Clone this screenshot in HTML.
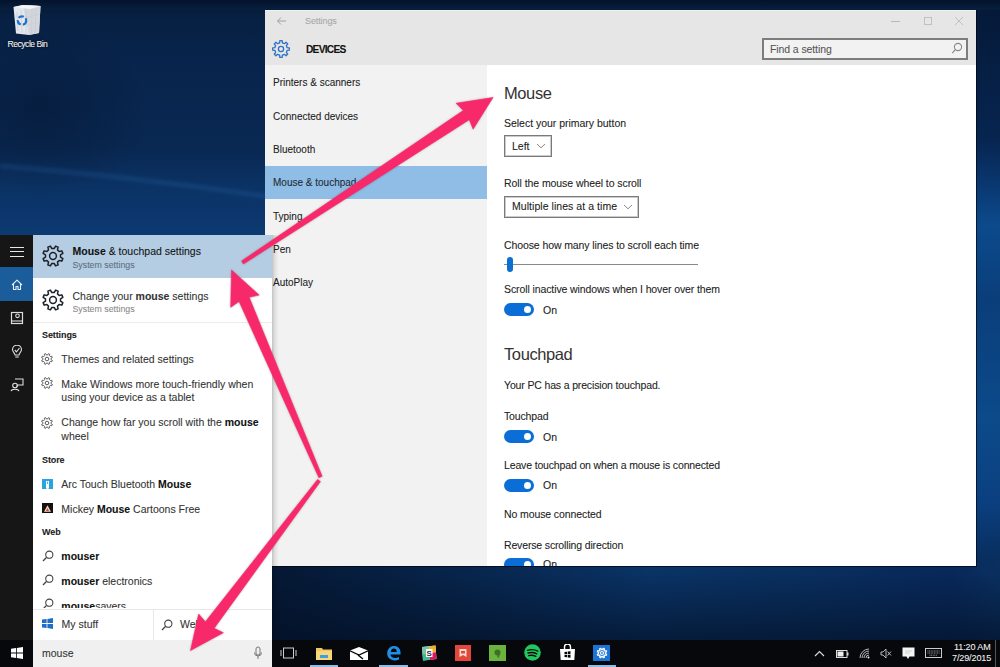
<!DOCTYPE html>
<html><head><meta charset="utf-8"><style>
html,body{margin:0;padding:0;}
body{width:1000px;height:667px;position:relative;overflow:hidden;font-family:"Liberation Sans", sans-serif;
background:#0a2a55;}
.t{position:absolute;white-space:nowrap;-webkit-text-stroke:0.08px currentColor;}
</style></head><body>
<div style="position:absolute;left:0px;top:0px;width:270px;height:240px;background:linear-gradient(180deg,#051632 0px,#072042 16px,#08244c 60px,#092852 150px,#0b3264 185px,#0c3a72 235px);"></div>
<div style="position:absolute;left:0px;top:0px;width:270px;height:240px;background:radial-gradient(ellipse 110px 90px at 40px 110px, rgba(3,15,35,0.35), rgba(3,15,35,0));"></div>
<svg style="position:absolute;left:0;top:0" width="270" height="240"><defs><filter id="bl" x="-50%" y="-50%" width="200%" height="200%"><feGaussianBlur stdDeviation="2"/></filter></defs><path d="M0 166 Q 130 176 270 197" stroke="rgba(60,140,220,0.3)" stroke-width="2.5" fill="none" filter="url(#bl)"/></svg>
<div style="position:absolute;left:970px;top:0px;width:30px;height:640px;background:linear-gradient(180deg,#041430 0px,#051a3a 14px,#072550 140px,#0a3a74 190px,#0c4a8c 225px,#0a3e7a 300px,#0c4a8a 420px,#0b4080 500px,#082e5e 560px,#06234c 640px);"></div>
<div style="position:absolute;left:0px;top:0px;width:1000px;height:10px;background:linear-gradient(180deg,#04122b,#07203f);"></div>
<div style="position:absolute;left:0px;top:560px;width:1000px;height:80px;background:linear-gradient(180deg,rgba(10,50,100,0) 0px, rgba(3,15,35,0.0) 12px, rgba(3,15,35,0.65) 80px),linear-gradient(90deg,#051834 0px,#051834 270px,#07244a 450px,#0a3366 650px,#092e5e 820px,#08285a 950px,#0a3060 1000px);"></div>
<svg style="position:absolute;left:13px;top:4px" width="28" height="32" viewBox="0 0 28 32">
<path d="M0.5 3 L10 1 L27.5 2 L26 29 L16 31 L3 29.5 Z" fill="#e4e7eb"/>
<path d="M10 1 L27.5 2 L26 29 L16 31 Z" fill="#d3d7dd"/>
<path d="M0.5 3 L10 1 L27.5 2 L17 5 Z" fill="#f3f4f6"/>
<path d="M4 8 L5 27 M8 6 L9 29 M13 6 L13 30 M19 5 L18.5 30 M23 4.5 L22 29" stroke="#c3c8cf" stroke-width="0.6"/>
<path d="M1 12 L16 13 L27 10 M2 20 L16 21 L26.5 18" stroke="#c8cdd3" stroke-width="0.6" fill="none"/>
<circle cx="9" cy="16.5" r="4.2" fill="none" stroke="#1f6fd0" stroke-width="2.2" stroke-dasharray="5.5 2.3"/>
</svg>
<div class="t" style="left:7.5px;top:39.72px;font-size:8.6px;line-height:8.6px;color:#f4f4f4;font-weight:normal;letter-spacing:-0.5px;text-shadow:0 0 2px #000;">Recycle Bin</div>
<div style="position:absolute;left:265px;top:10px;width:711px;height:556px;background:#fff;box-shadow:1px 1px 0 rgba(0,5,15,0.7);"></div>
<div style="position:absolute;left:265px;top:10px;width:711px;height:55px;background:#e6e6e6;"></div>
<div style="position:absolute;left:265px;top:10px;width:711px;height:1px;background:#f0f0f0;"></div>
<svg style="position:absolute;left:276px;top:16px" width="11" height="10" viewBox="0 0 11 10"><path d="M10 5 H1.5 M5 1.5 L1.5 5 L5 8.5" stroke="#a0a0a0" stroke-width="1" fill="none"/></svg>
<div class="t" style="left:305px;top:17.38px;font-size:9px;line-height:9px;color:#a8a8a8;font-weight:normal;letter-spacing:-0.1px;">Settings</div>
<div style="position:absolute;left:891px;top:21px;width:9px;height:1px;background:#b8b8b8;"></div>
<div style="position:absolute;left:924px;top:17px;width:8px;height:8px;border:1px solid #c0c0c0;box-sizing:border-box;"></div>
<svg style="position:absolute;left:954px;top:16px" width="10" height="10" viewBox="0 0 10 10"><path d="M1 1 L9 9 M9 1 L1 9" stroke="#c0c0c0" stroke-width="1"/></svg>
<svg style="position:absolute;left:270px;top:38px" width="22" height="22" viewBox="0 0 22 22"><path d="M17.15 9.63 L19.32 9.82 L19.32 12.18 L17.15 12.37 L16.32 14.38 L17.72 16.04 L16.04 17.72 L14.38 16.32 L12.37 17.15 L12.18 19.32 L9.82 19.32 L9.63 17.15 L7.62 16.32 L5.96 17.72 L4.28 16.04 L5.68 14.38 L4.85 12.37 L2.68 12.18 L2.68 9.82 L4.85 9.63 L5.68 7.62 L4.28 5.96 L5.96 4.28 L7.62 5.68 L9.63 4.85 L9.82 2.68 L12.18 2.68 L12.37 4.85 L14.38 5.68 L16.04 4.28 L17.72 5.96 L16.32 7.62 Z" fill="none" stroke="#2f72c4" stroke-width="1.3" stroke-linejoin="round"/><circle cx="11" cy="11" r="2.6" fill="none" stroke="#2f72c4" stroke-width="1.3"/></svg>
<div class="t" style="left:306px;top:44.97px;font-size:10.2px;line-height:10.2px;color:#111;font-weight:bold;letter-spacing:-0.75px;">DEVICES</div>
<div style="position:absolute;left:762px;top:38px;width:206px;height:22px;border:2px solid #7d7d7d;box-sizing:border-box;background:#f2f2f2;"></div>
<div class="t" style="left:770px;top:44.11px;font-size:10.5px;line-height:10.5px;color:#555;font-weight:normal;letter-spacing:-0.1px;">Find a setting</div>
<svg style="position:absolute;left:951px;top:42px" width="12" height="13" viewBox="0 0 12 13"><circle cx="7" cy="5" r="3.6" fill="none" stroke="#888" stroke-width="1.1"/><path d="M4.4 7.7 L1.2 11.2" stroke="#888" stroke-width="1.2"/></svg>
<div style="position:absolute;left:265px;top:65px;width:222px;height:501px;background:#f2f2f2;"></div>
<div style="position:absolute;left:265px;top:166px;width:222px;height:33px;background:#8fbde6;"></div>
<div class="t" style="left:273px;top:78.33px;font-size:10px;line-height:10px;color:#222;font-weight:normal;letter-spacing:0px;">Printers &amp; scanners</div>
<div class="t" style="left:273px;top:111.63px;font-size:10px;line-height:10px;color:#222;font-weight:normal;letter-spacing:0px;">Connected devices</div>
<div class="t" style="left:273px;top:144.93px;font-size:10px;line-height:10px;color:#222;font-weight:normal;letter-spacing:0px;">Bluetooth</div>
<div class="t" style="left:273px;top:178.23px;font-size:10px;line-height:10px;color:#1f2a35;font-weight:normal;letter-spacing:0px;">Mouse &amp; touchpad</div>
<div class="t" style="left:273px;top:211.53px;font-size:10px;line-height:10px;color:#222;font-weight:normal;letter-spacing:0px;">Typing</div>
<div class="t" style="left:273px;top:244.84px;font-size:10px;line-height:10px;color:#222;font-weight:normal;letter-spacing:0px;">Pen</div>
<div class="t" style="left:273px;top:278.13px;font-size:10px;line-height:10px;color:#222;font-weight:normal;letter-spacing:0px;">AutoPlay</div>
<div class="t" style="left:504px;top:85.03px;font-size:16.5px;line-height:16.5px;color:#333;font-weight:normal;letter-spacing:-0.4px;-webkit-text-stroke:0;">Mouse</div>
<div class="t" style="left:504px;top:118.11px;font-size:10.5px;line-height:10.5px;color:#222;font-weight:normal;letter-spacing:-0.02px;">Select your primary button</div>
<div style="position:absolute;left:504px;top:135px;width:48px;height:21.5px;border:1px solid #7a7a7a;box-shadow:inset 0 0 0 1px rgba(140,140,140,0.45);box-sizing:border-box;"></div>
<div class="t" style="left:512px;top:140.61px;font-size:10.5px;line-height:10.5px;color:#222;font-weight:normal;letter-spacing:0px;">Left</div>
<svg style="position:absolute;left:536px;top:143px" width="10" height="6" viewBox="0 0 10 6"><path d="M1 1 L5 4.8 L9 1" stroke="#8a8a8a" stroke-width="1" fill="none"/></svg>
<div class="t" style="left:504px;top:178.41px;font-size:10.5px;line-height:10.5px;color:#222;font-weight:normal;letter-spacing:-0.07px;">Roll the mouse wheel to scroll</div>
<div style="position:absolute;left:504px;top:196px;width:135px;height:21.5px;border:1px solid #7a7a7a;box-shadow:inset 0 0 0 1px rgba(140,140,140,0.45);box-sizing:border-box;"></div>
<div class="t" style="left:512px;top:201.41px;font-size:10.5px;line-height:10.5px;color:#222;font-weight:normal;letter-spacing:0.05px;">Multiple lines at a time</div>
<svg style="position:absolute;left:623px;top:204px" width="10" height="6" viewBox="0 0 10 6"><path d="M1 1 L5 4.8 L9 1" stroke="#8a8a8a" stroke-width="1" fill="none"/></svg>
<div class="t" style="left:504px;top:239.71px;font-size:10.5px;line-height:10.5px;color:#222;font-weight:normal;letter-spacing:-0.1px;">Choose how many lines to scroll each time</div>
<div style="position:absolute;left:504px;top:264px;width:194px;height:1px;background:#8a8a8a;"></div>
<div style="position:absolute;left:507px;top:257px;width:6px;height:15px;background:#0f6fd0;border-radius:3px;"></div>
<div class="t" style="left:504px;top:283.71px;font-size:10.5px;line-height:10.5px;color:#222;font-weight:normal;letter-spacing:-0.1px;">Scroll inactive windows when I hover over them</div>
<div style="position:absolute;left:504px;top:303px;width:30px;height:13px;background:#0a6ed6;border-radius:7px;"></div>
<div style="position:absolute;left:524px;top:306px;width:7px;height:7px;background:#fff;border-radius:50%;"></div>
<div class="t" style="left:543px;top:304.61px;font-size:10.5px;line-height:10.5px;color:#222;font-weight:normal;letter-spacing:0px;">On</div>
<div class="t" style="left:504px;top:346.43px;font-size:16.5px;line-height:16.5px;color:#333;font-weight:normal;letter-spacing:-0.4px;-webkit-text-stroke:0;">Touchpad</div>
<div class="t" style="left:504px;top:380.31px;font-size:10.5px;line-height:10.5px;color:#222;font-weight:normal;letter-spacing:-0.15px;">Your PC has a precision touchpad.</div>
<div class="t" style="left:504px;top:410.81px;font-size:10.5px;line-height:10.5px;color:#222;font-weight:normal;letter-spacing:-0.15px;">Touchpad</div>
<div style="position:absolute;left:504px;top:430px;width:30px;height:13px;background:#0a6ed6;border-radius:7px;"></div>
<div style="position:absolute;left:524px;top:433px;width:7px;height:7px;background:#fff;border-radius:50%;"></div>
<div class="t" style="left:543px;top:431.91px;font-size:10.5px;line-height:10.5px;color:#222;font-weight:normal;letter-spacing:0px;">On</div>
<div class="t" style="left:504px;top:459.81px;font-size:10.5px;line-height:10.5px;color:#222;font-weight:normal;letter-spacing:-0.15px;">Leave touchpad on when a mouse is connected</div>
<div style="position:absolute;left:504px;top:479px;width:30px;height:13px;background:#0a6ed6;border-radius:7px;"></div>
<div style="position:absolute;left:524px;top:482px;width:7px;height:7px;background:#fff;border-radius:50%;"></div>
<div class="t" style="left:543px;top:480.11px;font-size:10.5px;line-height:10.5px;color:#222;font-weight:normal;letter-spacing:0px;">On</div>
<div class="t" style="left:504px;top:509.01px;font-size:10.5px;line-height:10.5px;color:#222;font-weight:normal;letter-spacing:-0.1px;">No mouse connected</div>
<div class="t" style="left:504px;top:539.51px;font-size:10.5px;line-height:10.5px;color:#222;font-weight:normal;letter-spacing:-0.15px;">Reverse scrolling direction</div>
<div style="position:absolute;left:265px;top:550px;width:711px;height:16px;overflow:hidden;">
<div style="position:absolute;left:239px;top:7.5px;width:30px;height:13px;background:#0a6ed6;border-radius:7px;"></div><div style="position:absolute;left:259px;top:10.5px;width:7px;height:7px;background:#fff;border-radius:50%;"></div>
<div class="t" style="left:278px;top:8.61px;font-size:10.5px;line-height:10.5px;color:#222;">On</div>
</div>
<div style="position:absolute;left:0px;top:640px;width:1000px;height:27px;background:#07080b;"></div>
<div style="position:absolute;left:0px;top:235px;width:33px;height:405px;background:#161616;"></div>
<div style="position:absolute;left:0px;top:267px;width:33px;height:34px;background:#1b5c9b;"></div>
<div style="position:absolute;left:33px;top:235px;width:239px;height:405px;background:#fff;"></div>
<div style="position:absolute;left:33px;top:235px;width:239px;height:42.5px;background:#b5cde3;"></div>
<div style="position:absolute;left:33px;top:640px;width:239px;height:27px;background:#f0f0f0;"></div>
<div style="position:absolute;left:272px;top:235px;width:7px;height:405px;background:linear-gradient(90deg,rgba(0,0,0,0.2),rgba(0,0,0,0.08) 40%,rgba(0,0,0,0));"></div>
<div style="position:absolute;left:9.5px;top:246.5px;width:14.5px;height:1.3px;background:#e8e8e8;"></div>
<div style="position:absolute;left:9.5px;top:251px;width:14.5px;height:1.3px;background:#e8e8e8;"></div>
<div style="position:absolute;left:9.5px;top:255.5px;width:14.5px;height:1.3px;background:#e8e8e8;"></div>
<svg style="position:absolute;left:11px;top:279px" width="12" height="12" viewBox="0 0 12 12"><path d="M1 6 L6 1.2 L11 6 M2.5 4.8 V10.5 H5 V7.5 H7 V10.5 H9.5 V4.8" stroke="#e8eef6" stroke-width="1.1" fill="none" stroke-linejoin="round"/></svg>
<svg style="position:absolute;left:10px;top:311px" width="14" height="14" viewBox="0 0 14 14"><rect x="1.5" y="1.5" width="11" height="11" fill="none" stroke="#ddd" stroke-width="1.2"/><path d="M1.5 10 H12.5" stroke="#ddd" stroke-width="1.1"/><circle cx="7.5" cy="4.8" r="1.8" fill="none" stroke="#ddd" stroke-width="1.1"/></svg>
<svg style="position:absolute;left:11px;top:345px" width="12" height="14" viewBox="0 0 12 14"><path d="M4 10 C4 8 1.5 7 1.5 4.6 A4.5 4.5 0 0 1 10.5 4.6 C10.5 7 8 8 8 10 Z" fill="none" stroke="#ddd" stroke-width="1.1"/><path d="M4.3 12 H7.7" stroke="#ddd" stroke-width="1.1"/><path d="M3.8 5 L5.5 6.8 L8.5 3" stroke="#ddd" stroke-width="1.1" fill="none"/></svg>
<svg style="position:absolute;left:10px;top:378px" width="14" height="14" viewBox="0 0 14 14"><path d="M5 1 H13 V7 H8 L6.5 8.5" fill="none" stroke="#ddd" stroke-width="1.1"/><circle cx="5" cy="7.5" r="2.3" fill="none" stroke="#ddd" stroke-width="1.1"/><path d="M1 13.2 C1.5 10.5 8.5 10.5 9 13.2" fill="none" stroke="#ddd" stroke-width="1.1"/></svg>
<svg style="position:absolute;left:40.8px;top:243.5px" width="24" height="24" viewBox="0 0 24 24"><path d="M13.19 4.49 L14.61 2.14 L17.12 3.18 L16.47 5.85 L18.15 7.53 L20.82 6.88 L21.86 9.39 L19.51 10.81 L19.51 13.19 L21.86 14.61 L20.82 17.12 L18.15 16.47 L16.47 18.15 L17.12 20.82 L14.61 21.86 L13.19 19.51 L10.81 19.51 L9.39 21.86 L6.88 20.82 L7.53 18.15 L5.85 16.47 L3.18 17.12 L2.14 14.61 L4.49 13.19 L4.49 10.81 L2.14 9.39 L3.18 6.88 L5.85 7.53 L7.53 5.85 L6.88 3.18 L9.39 2.14 L10.81 4.49 Z" fill="none" stroke="#1c2228" stroke-width="1.5" stroke-linejoin="round"/><circle cx="12" cy="12" r="3.4" fill="none" stroke="#1c2228" stroke-width="1.5"/></svg>
<div class="t" style="left:72.5px;top:245.61px;font-size:10.5px;line-height:10.5px;color:#111;font-weight:normal;letter-spacing:0px;"><b>Mouse</b> &amp; touchpad settings</div>
<div class="t" style="left:72.5px;top:261.25px;font-size:8.8px;line-height:8.8px;color:#5f6f80;font-weight:normal;letter-spacing:0px;">System settings</div>
<svg style="position:absolute;left:40.8px;top:287.5px" width="24" height="24" viewBox="0 0 24 24"><path d="M13.19 4.49 L14.61 2.14 L17.12 3.18 L16.47 5.85 L18.15 7.53 L20.82 6.88 L21.86 9.39 L19.51 10.81 L19.51 13.19 L21.86 14.61 L20.82 17.12 L18.15 16.47 L16.47 18.15 L17.12 20.82 L14.61 21.86 L13.19 19.51 L10.81 19.51 L9.39 21.86 L6.88 20.82 L7.53 18.15 L5.85 16.47 L3.18 17.12 L2.14 14.61 L4.49 13.19 L4.49 10.81 L2.14 9.39 L3.18 6.88 L5.85 7.53 L7.53 5.85 L6.88 3.18 L9.39 2.14 L10.81 4.49 Z" fill="none" stroke="#1c2228" stroke-width="1.5" stroke-linejoin="round"/><circle cx="12" cy="12" r="3.4" fill="none" stroke="#1c2228" stroke-width="1.5"/></svg>
<div class="t" style="left:72.5px;top:290.61px;font-size:10.5px;line-height:10.5px;color:#333;font-weight:normal;letter-spacing:0px;">Change your <b>mouse</b> settings</div>
<div class="t" style="left:72.5px;top:305.05px;font-size:8.8px;line-height:8.8px;color:#8a8a8a;font-weight:normal;letter-spacing:0px;">System settings</div>
<div style="position:absolute;left:33px;top:322px;width:239px;height:1px;background:#ececec;"></div>
<div class="t" style="left:42px;top:331.08px;font-size:9px;line-height:9px;color:#222;font-weight:bold;letter-spacing:-0.1px;">Settings</div>
<svg style="position:absolute;left:40.1px;top:351.5px" width="14" height="14" viewBox="0 0 14 14"><path d="M7.64 2.95 L8.41 1.68 L9.76 2.24 L9.41 3.68 L10.32 4.59 L11.76 4.24 L12.32 5.59 L11.05 6.36 L11.05 7.64 L12.32 8.41 L11.76 9.76 L10.32 9.41 L9.41 10.32 L9.76 11.76 L8.41 12.32 L7.64 11.05 L6.36 11.05 L5.59 12.32 L4.24 11.76 L4.59 10.32 L3.68 9.41 L2.24 9.76 L1.68 8.41 L2.95 7.64 L2.95 6.36 L1.68 5.59 L2.24 4.24 L3.68 4.59 L4.59 3.68 L4.24 2.24 L5.59 1.68 L6.36 2.95 Z" fill="none" stroke="#5a5a5a" stroke-width="1.0" stroke-linejoin="round"/><circle cx="7" cy="7" r="1.8" fill="none" stroke="#5a5a5a" stroke-width="1.0"/></svg>
<div class="t" style="left:61.3px;top:353.61px;font-size:10.5px;line-height:10.5px;color:#333;font-weight:normal;letter-spacing:0px;">Themes and related settings</div>
<svg style="position:absolute;left:40.1px;top:376.4px" width="14" height="14" viewBox="0 0 14 14"><path d="M7.64 2.95 L8.41 1.68 L9.76 2.24 L9.41 3.68 L10.32 4.59 L11.76 4.24 L12.32 5.59 L11.05 6.36 L11.05 7.64 L12.32 8.41 L11.76 9.76 L10.32 9.41 L9.41 10.32 L9.76 11.76 L8.41 12.32 L7.64 11.05 L6.36 11.05 L5.59 12.32 L4.24 11.76 L4.59 10.32 L3.68 9.41 L2.24 9.76 L1.68 8.41 L2.95 7.64 L2.95 6.36 L1.68 5.59 L2.24 4.24 L3.68 4.59 L4.59 3.68 L4.24 2.24 L5.59 1.68 L6.36 2.95 Z" fill="none" stroke="#5a5a5a" stroke-width="1.0" stroke-linejoin="round"/><circle cx="7" cy="7" r="1.8" fill="none" stroke="#5a5a5a" stroke-width="1.0"/></svg>
<div class="t" style="left:61.3px;top:378.61px;font-size:10.5px;line-height:10.5px;color:#333;font-weight:normal;letter-spacing:0px;">Make Windows more touch-friendly when</div>
<div class="t" style="left:61.3px;top:392.11px;font-size:10.5px;line-height:10.5px;color:#333;font-weight:normal;letter-spacing:0px;">using your device as a tablet</div>
<svg style="position:absolute;left:40.1px;top:415.5px" width="14" height="14" viewBox="0 0 14 14"><path d="M7.64 2.95 L8.41 1.68 L9.76 2.24 L9.41 3.68 L10.32 4.59 L11.76 4.24 L12.32 5.59 L11.05 6.36 L11.05 7.64 L12.32 8.41 L11.76 9.76 L10.32 9.41 L9.41 10.32 L9.76 11.76 L8.41 12.32 L7.64 11.05 L6.36 11.05 L5.59 12.32 L4.24 11.76 L4.59 10.32 L3.68 9.41 L2.24 9.76 L1.68 8.41 L2.95 7.64 L2.95 6.36 L1.68 5.59 L2.24 4.24 L3.68 4.59 L4.59 3.68 L4.24 2.24 L5.59 1.68 L6.36 2.95 Z" fill="none" stroke="#5a5a5a" stroke-width="1.0" stroke-linejoin="round"/><circle cx="7" cy="7" r="1.8" fill="none" stroke="#5a5a5a" stroke-width="1.0"/></svg>
<div class="t" style="left:61.3px;top:417.41px;font-size:10.5px;line-height:10.5px;color:#333;font-weight:normal;letter-spacing:0px;">Change how far you scroll with the <b style="color:#111">mouse</b></div>
<div class="t" style="left:61.3px;top:431.31px;font-size:10.5px;line-height:10.5px;color:#333;font-weight:normal;letter-spacing:0px;">wheel</div>
<div class="t" style="left:42px;top:456.08px;font-size:9px;line-height:9px;color:#222;font-weight:bold;letter-spacing:-0.1px;">Store</div>
<div style="position:absolute;left:41.5px;top:478.8px;width:11px;height:10.7px;background:#2aa4e0;"></div>
<svg style="position:absolute;left:41.5px;top:478.8px" width="11" height="11" viewBox="0 0 11 11"><path d="M4 2 H7 V8.5 A1.5 1.5 0 0 1 4 8.5 Z" fill="#fff"/><path d="M5.5 2.5 V5" stroke="#2aa4e0" stroke-width="0.8"/></svg>
<div class="t" style="left:61.3px;top:478.61px;font-size:10.5px;line-height:10.5px;color:#333;font-weight:normal;letter-spacing:0px;">Arc Touch Bluetooth <b style="color:#111">Mouse</b></div>
<div style="position:absolute;left:41.5px;top:502.7px;width:11px;height:10.6px;background:#141010;"></div>
<svg style="position:absolute;left:41.5px;top:502.7px" width="11" height="11" viewBox="0 0 11 11"><path d="M5.5 2.3 L9 8.8 H2 Z" fill="#f3d6c8"/><path d="M5.5 5 L7 8 H4 Z" fill="#d9402a"/></svg>
<div class="t" style="left:61.3px;top:503.61px;font-size:10.5px;line-height:10.5px;color:#333;font-weight:normal;letter-spacing:0px;">Mickey <b style="color:#111">Mouse</b> Cartoons Free</div>
<div class="t" style="left:42px;top:528.38px;font-size:9px;line-height:9px;color:#222;font-weight:bold;letter-spacing:-0.1px;">Web</div>
<svg style="position:absolute;left:41.5px;top:550px" width="12" height="12" viewBox="0 0 12 12"><circle cx="7.3" cy="4.7" r="3.6" fill="none" stroke="#444" stroke-width="1.1"/><path d="M4.7 7.3 L1 11" stroke="#444" stroke-width="1.265"/></svg>
<div class="t" style="left:61.3px;top:551.11px;font-size:10.5px;line-height:10.5px;color:#333;font-weight:normal;letter-spacing:0px;"><b style="color:#111">mouser</b></div>
<svg style="position:absolute;left:41.5px;top:574px" width="12" height="12" viewBox="0 0 12 12"><circle cx="7.3" cy="4.7" r="3.6" fill="none" stroke="#444" stroke-width="1.1"/><path d="M4.7 7.3 L1 11" stroke="#444" stroke-width="1.265"/></svg>
<div class="t" style="left:61.3px;top:575.71px;font-size:10.5px;line-height:10.5px;color:#333;font-weight:normal;letter-spacing:0px;"><b style="color:#111">mouser</b> electronics</div>
<div style="position:absolute;left:33px;top:590px;width:239px;height:18px;overflow:hidden;">
<svg style="position:absolute;left:8.5px;top:8px" width="12" height="12" viewBox="0 0 12 12"><circle cx="7.3" cy="4.7" r="3.6" fill="none" stroke="#444" stroke-width="1.1"/><path d="M4.7 7.3 L1 11" stroke="#444" stroke-width="1.25"/></svg>
<div class="t" style="left:28.3px;top:10.61px;font-size:10.5px;line-height:10.5px;color:#333;letter-spacing:0px"><b style="color:#111">mouse</b>savers</div>
</div>
<div style="position:absolute;left:33px;top:608.5px;width:239px;height:1px;background:#e8e8e8;"></div>
<div style="position:absolute;left:152.5px;top:609px;width:1px;height:31px;background:#e8e8e8;"></div>
<svg style="position:absolute;left:42px;top:618px" width="11" height="11" viewBox="0 0 11 11"><path d="M0 1.6 L4.6 1 V5.1 H0 Z M5.4 0.9 L11 0 V5.1 H5.4 Z M0 5.9 H4.6 V10 L0 9.4 Z M5.4 5.9 H11 V11 L5.4 10.1 Z" fill="#1f6fc8"/></svg>
<div class="t" style="left:61.6px;top:618.91px;font-size:10.5px;line-height:10.5px;color:#333;font-weight:normal;letter-spacing:0px;">My stuff</div>
<svg style="position:absolute;left:161px;top:618.5px" width="12" height="12" viewBox="0 0 12 12"><circle cx="7.3" cy="4.7" r="3.6" fill="none" stroke="#444" stroke-width="1.1"/><path d="M4.7 7.3 L1 11" stroke="#444" stroke-width="1.265"/></svg>
<div class="t" style="left:180px;top:618.91px;font-size:10.5px;line-height:10.5px;color:#333;font-weight:normal;letter-spacing:0px;">Web</div>
<div class="t" style="left:42px;top:647.81px;font-size:10.5px;line-height:10.5px;color:#333;font-weight:normal;letter-spacing:0px;">mouse</div>
<svg style="position:absolute;left:253px;top:646px" width="10" height="14" viewBox="0 0 10 14"><rect x="3" y="1" width="4" height="8" rx="2" fill="none" stroke="#777" stroke-width="1"/><path d="M1.5 6.5 A3.5 3.5 0 0 0 8.5 6.5 M5 10 V13" stroke="#777" stroke-width="1" fill="none"/></svg>
<svg style="position:absolute;left:11px;top:647px" width="12" height="12" viewBox="0 0 12 12"><path d="M0 1.7 L5 1 V5.6 H0 Z M5.8 0.9 L12 0 V5.6 H5.8 Z M0 6.4 H5 V11 L0 10.3 Z M5.8 6.4 H12 V12 L5.8 11.1 Z" fill="#fff"/></svg>
<svg style="position:absolute;left:280px;top:647px" width="17" height="12" viewBox="0 0 17 12"><rect x="3.5" y="1" width="10" height="10" fill="none" stroke="#ccc" stroke-width="1"/><path d="M1 3 V9 M16 3 V9" stroke="#ccc" stroke-width="1"/></svg>
<svg style="position:absolute;left:316px;top:647px" width="16" height="13" viewBox="0 0 16 13"><path d="M0 1 H6 L7 2.5 H16 V13 H0 Z" fill="#f1c65c"/><rect x="0" y="4" width="16" height="9" fill="#f8d77a"/><rect x="4" y="8" width="8" height="3" fill="#3aa0e0"/></svg>
<div style="position:absolute;left:310px;top:665px;width:28px;height:2px;background:#8dbde6;"></div>
<svg style="position:absolute;left:350px;top:647px" width="18" height="13" viewBox="0 0 18 13"><path d="M0 3.5 L9 0 L18 3.5 V13 H0 Z" fill="#fff"/><path d="M0 3.8 L9 8 L18 3.8" fill="none" stroke="#000" stroke-width="1.2"/><path d="M8 8 L13 12" stroke="#000" stroke-width="1.4"/></svg>
<svg style="position:absolute;left:386px;top:645px" width="16" height="16" viewBox="0 0 16 16"><path d="M14.5 9.5 H4.5 C4.8 12.5 8.5 14 13 12 V14.5 C7 17 1 14 1.2 8 C1.5 3 5 0.8 8.5 1 C12.5 1.2 15 4 14.5 9.5 Z M4.8 7 H10.8 C10.7 4.5 9.5 3.6 7.8 3.6 C6 3.6 5 5 4.8 7 Z" fill="#1e8ee6"/></svg>
<div style="position:absolute;left:379px;top:665px;width:29px;height:2px;background:#8dbde6;"></div>
<svg style="position:absolute;left:421px;top:645px" width="16" height="16" viewBox="0 0 16 16"><path d="M1 2 L14.5 0.5 L15.5 14 L2 15.5 Z" fill="#f2f2f2"/><path d="M1 2 L8 1.2 L8.5 8 L1.5 8.8 Z" fill="#70c6a8"/><path d="M8 1.2 L14.5 0.5 L15 7.2 L8.5 8 Z" fill="#e8b52a"/><path d="M1.5 8.8 L8.5 8 L9 15 L2 15.5 Z" fill="#3eb991"/><path d="M8.5 8 L15 7.2 L15.5 14 L9 15 Z" fill="#e01765"/><rect x="5" y="4" width="6.5" height="8" fill="#fff"/><text x="8.2" y="11" font-family="Liberation Sans" font-weight="bold" font-size="8" text-anchor="middle" fill="#3d2a3a">S</text></svg>
<div style="position:absolute;left:454.5px;top:644.5px;width:16.5px;height:16.5px;background:#e2483a;"></div>
<svg style="position:absolute;left:458px;top:648px" width="10" height="10" viewBox="0 0 10 10"><path d="M1.5 1 H8.5 V9 L5 7 L1.5 9 Z" fill="#f6d7d2"/><rect x="3" y="3" width="4" height="2.5" fill="#e2483a"/></svg>
<div style="position:absolute;left:489px;top:644.5px;width:17px;height:16.5px;background:#6ab43e;"></div>
<svg style="position:absolute;left:493px;top:648px" width="9" height="10" viewBox="0 0 9 10"><circle cx="4.5" cy="4.5" r="3" fill="#3f6e26"/><path d="M6 6 L5 9.5" stroke="#3f6e26" stroke-width="1.6"/></svg>
<svg style="position:absolute;left:524px;top:644px" width="17" height="17" viewBox="0 0 17 17"><circle cx="8.5" cy="8.5" r="8.3" fill="#21c85f"/><path d="M3.5 6.3 C7 5.2 11 5.6 13.8 7.1 M4 9 C7 8.2 10.5 8.6 12.8 9.8 M4.6 11.6 C7 11 9.8 11.3 11.8 12.4" stroke="#0a0a0a" stroke-width="1.3" fill="none" stroke-linecap="round"/></svg>
<svg style="position:absolute;left:559px;top:644px" width="17" height="17" viewBox="0 0 17 17"><path d="M5.5 5 V3 A3 3 0 0 1 11.5 3 V5" fill="none" stroke="#fff" stroke-width="1.4"/><path d="M1 5 H16 L15.3 16 H1.7 Z" fill="#fff"/><path d="M5.5 8 L8 7.7 V10.2 H5.5 Z M8.7 7.6 L11.5 7.3 V10.2 H8.7 Z M5.5 10.9 H8 V13.3 L5.5 13 Z M8.7 10.9 H11.5 V13.7 L8.7 13.4 Z" fill="#000"/></svg>
<div style="position:absolute;left:593px;top:644.5px;width:17px;height:16.5px;background:#1a73d6;"></div>
<svg style="position:absolute;left:595.5px;top:647px" width="12" height="12" viewBox="0 0 12 12"><path d="M6.53 2.64 L7.23 1.36 L8.41 1.85 L8.00 3.25 L8.75 4.00 L10.15 3.59 L10.64 4.77 L9.36 5.47 L9.36 6.53 L10.64 7.23 L10.15 8.41 L8.75 8.00 L8.00 8.75 L8.41 10.15 L7.23 10.64 L6.53 9.36 L5.47 9.36 L4.77 10.64 L3.59 10.15 L4.00 8.75 L3.25 8.00 L1.85 8.41 L1.36 7.23 L2.64 6.53 L2.64 5.47 L1.36 4.77 L1.85 3.59 L3.25 4.00 L4.00 3.25 L3.59 1.85 L4.77 1.36 L5.47 2.64 Z" fill="none" stroke="#fff" stroke-width="1.2" stroke-linejoin="round"/><circle cx="6" cy="6" r="1.5" fill="none" stroke="#fff" stroke-width="1.2"/></svg>
<div style="position:absolute;left:588px;top:665px;width:28px;height:2px;background:#8dbde6;"></div>
<svg style="position:absolute;left:814px;top:650px" width="11" height="7" viewBox="0 0 11 7"><path d="M1 6 L5.5 1.5 L10 6" stroke="#ddd" stroke-width="1.1" fill="none"/></svg>
<svg style="position:absolute;left:836px;top:650px" width="13" height="8" viewBox="0 0 13 8"><rect x="0.5" y="0.5" width="10.5" height="7" fill="none" stroke="#ddd" stroke-width="1"/><rect x="1.5" y="1.5" width="6" height="5" fill="#eee"/><rect x="11" y="2.5" width="1.5" height="3" fill="#ddd"/></svg>
<svg style="position:absolute;left:859px;top:648px" width="11" height="11" viewBox="0 0 11 11"><path d="M1 10 A9 9 0 0 1 10 1 M3 10 A7 7 0 0 1 10 3 M5 10 A5 5 0 0 1 10 5 M7 10 A3 3 0 0 1 10 7" stroke="#ccc" stroke-width="0.9" fill="none"/><circle cx="9.5" cy="9.5" r="1" fill="#eee"/></svg>
<svg style="position:absolute;left:880px;top:648px" width="12" height="11" viewBox="0 0 12 11"><path d="M1 4 H3 L6 1 V10 L3 7 H1 Z" fill="none" stroke="#ccc" stroke-width="0.9"/><path d="M7.5 3.5 L11 7.5 M11 3.5 L7.5 7.5" stroke="#ccc" stroke-width="0.9"/></svg>
<svg style="position:absolute;left:902px;top:647px" width="13" height="13" viewBox="0 0 13 13"><path d="M0.5 0.5 H12.5 V9.5 H7.5 L6 12 L4.5 9.5 H0.5 Z" fill="#f4f4f4"/><path d="M3 4 H10 M3 6 H8" stroke="#bbb" stroke-width="0.6"/></svg>
<svg style="position:absolute;left:925px;top:648px" width="17" height="10" viewBox="0 0 17 10"><rect x="0.5" y="0.5" width="16" height="9" fill="none" stroke="#ccc" stroke-width="1"/><path d="M2.5 3 H14.5 M2.5 5 H14.5 M4.5 7.2 H12.5" stroke="#bbb" stroke-width="0.8" stroke-dasharray="1 0.6"/></svg>
<div class="t" style="left:954px;top:643.38px;font-size:9px;line-height:9px;color:#f2f2f2;font-weight:normal;letter-spacing:-0.1px;">11:20 AM</div>
<div class="t" style="left:952px;top:653.88px;font-size:9px;line-height:9px;color:#f2f2f2;font-weight:normal;letter-spacing:-0.1px;">7/29/2015</div>
<div style="position:absolute;left:995px;top:640px;width:1px;height:27px;background:#555;"></div>
<svg style="position:absolute;left:0;top:0;filter:drop-shadow(0 0 1px rgba(0,0,0,0.25))" width="1000" height="667" viewBox="0 0 1000 667"><path d="M243.46 263.96 L469.30 119.70 L473.13 129.15 L493.00 97.50 L456.08 103.26 L463.25 110.51 L241.54 261.04 Z" fill="#f7296b" stroke="#f7296b" stroke-width="0.6" stroke-linejoin="round"/><path d="M322.11 476.31 L249.19 297.23 L259.17 295.11 L231.50 270.00 L230.69 307.36 L239.09 301.57 L318.89 477.69 Z" fill="#f7296b" stroke="#f7296b" stroke-width="0.6" stroke-linejoin="round"/><path d="M317.60 479.44 L205.41 621.66 L198.64 614.03 L190.50 650.50 L223.37 632.72 L214.18 628.29 L320.40 481.56 Z" fill="#f7296b" stroke="#f7296b" stroke-width="0.6" stroke-linejoin="round"/></svg>
</body></html>
